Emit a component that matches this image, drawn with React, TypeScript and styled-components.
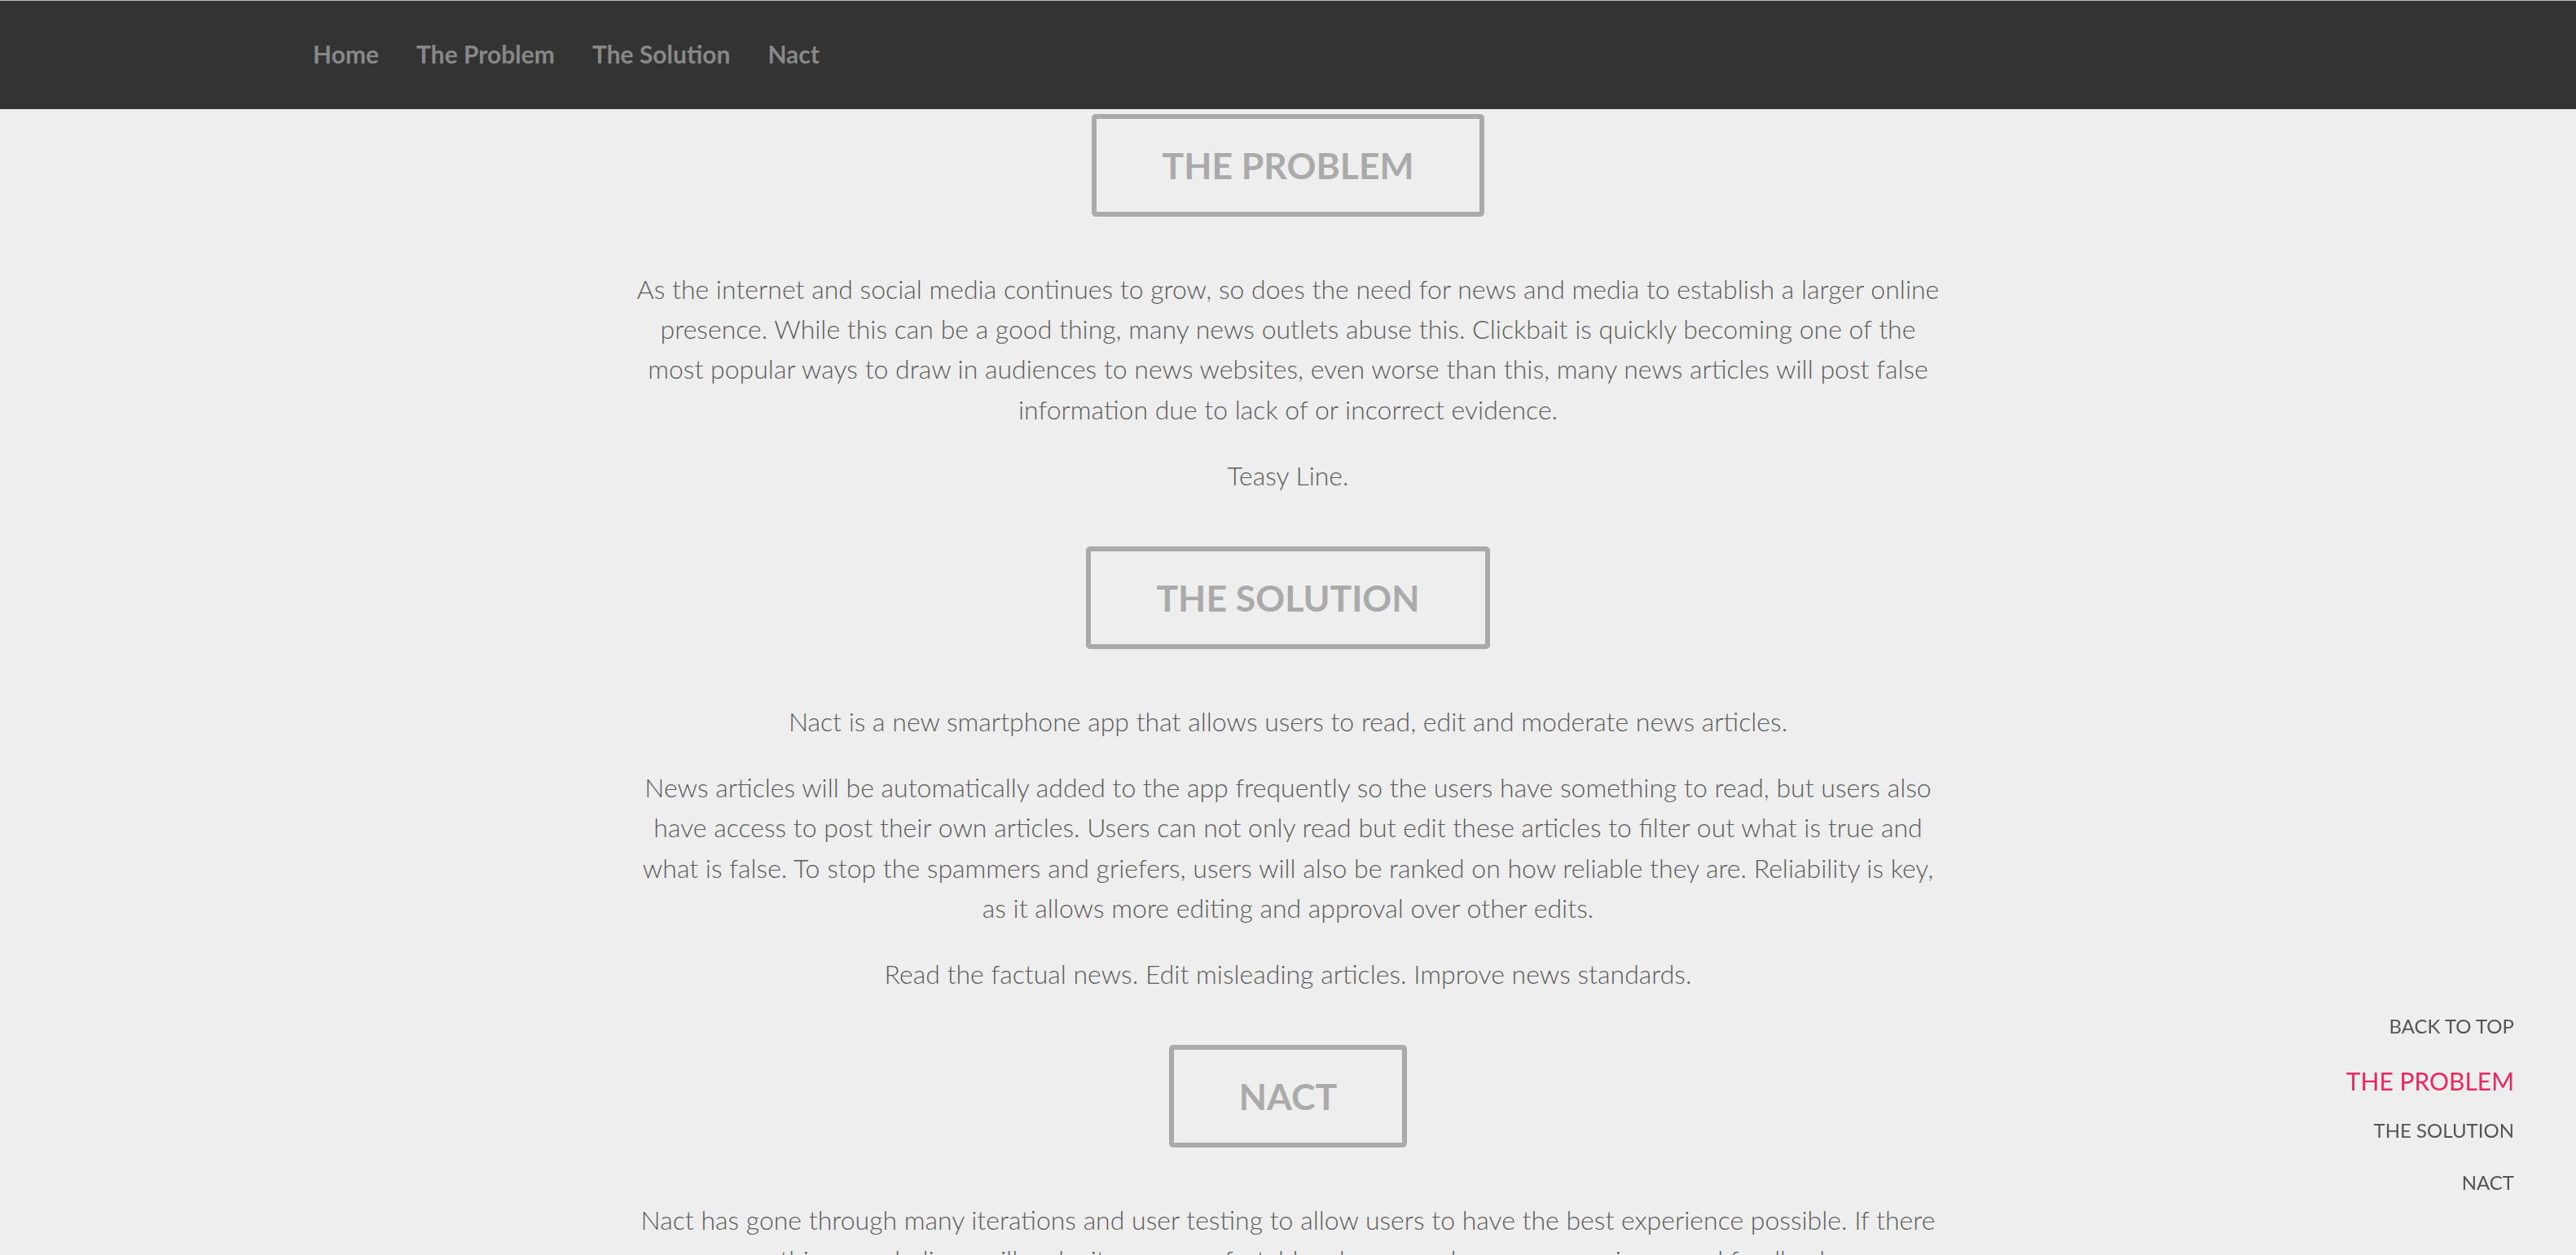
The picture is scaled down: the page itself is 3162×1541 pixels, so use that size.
import React from 'react';
import styled, { createGlobalStyle } from 'styled-components';

const GlobalStyle = createGlobalStyle`
  html, body {
    margin: 0;
    padding: 0;
    background: #eeeeee;
    font-family: Lato, "Open Sans", sans-serif;
  }
`;

const Header = styled.header`
  display: flex;
  align-items: center;
  box-sizing: border-box;
  height: 134px;
  padding-bottom: 3px;
  border-top: 1px solid #bdbdbd;
  background: #333333;
`;

const NavList = styled.nav`
  display: flex;
  align-items: center;
  padding-left: 361px;
`;

const NavLink = styled.a`
  padding: 0 23px;
  font-size: 30px;
  font-weight: 700;
  color: #888888;
  text-decoration: none;
  cursor: pointer;
`;

const Main = styled.main`
  max-width: 1608px;
  margin: 0 auto;
  padding-top: 6px;
  text-align: center;
`;

const Section = styled.section`
  & + & {
    padding-top: 31px;
  }
`;

const Title = styled.h2`
  display: inline-block;
  margin: 0 0 64px;
  padding: 32px 80px;
  border: 6px solid #aaaaaa;
  border-radius: 5px;
  font-size: 44.5px;
  line-height: 50px;
  font-weight: 700;
  color: #aaaaaa;
`;

const Text = styled.p`
  margin: 0 0 32px;
  font-size: 32px;
  line-height: 49.2px;
  font-weight: 300;
  color: #5c5c5c;
`;

const SideNav = styled.ul`
  position: fixed;
  right: 76px;
  bottom: 57px;
  display: flex;
  flex-direction: column;
  align-items: flex-end;
  margin: 0;
  padding: 0;
  list-style: none;
`;

const SideItem = styled.li<{ $active?: boolean }>`
  box-sizing: border-box;
  height: 64px;
  padding-top: ${(p) => (p.$active ? '6px' : '0')};
  line-height: ${(p) => (p.$active ? '58px' : '64px')};
  font-size: ${(p) => (p.$active ? '30px' : '24px')};
  font-weight: 400;
  color: ${(p) => (p.$active ? '#e8285f' : '#555555')};
  text-transform: uppercase;
  cursor: pointer;
`;

const navItems = ['Home', 'The Problem', 'The Solution', 'Nact'];

const sections = [
  {
    title: 'The Problem',
    paragraphs: [
      'As the internet and social media continues to grow, so does the need for news and media to establish a larger online presence. While this can be a good thing, many news outlets abuse this. Clickbait is quickly becoming one of the most popular ways to draw in audiences to news websites, even worse than this, many news articles will post false information due to lack of or incorrect evidence.',
      'Teasy Line.',
    ],
  },
  {
    title: 'The Solution',
    paragraphs: [
      'Nact is a new smartphone app that allows users to read, edit and moderate news articles.',
      'News articles will be automatically added to the app frequently so the users have something to read, but users also have access to post their own articles. Users can not only read but edit these articles to filter out what is true and what is false. To stop the spammers and griefers, users will also be ranked on how reliable they are. Reliability is key, as it allows more editing and approval over other edits.',
      'Read the factual news. Edit misleading articles. Improve news standards.',
    ],
  },
  {
    title: 'Nact',
    paragraphs: [
      'Nact has gone through many iterations and user testing to allow users to have the best experience possible. If there are things we believe will make it more comfortable, please send us your experience and feedback.',
    ],
  },
];

const sideItems = ['Back to top', 'The Problem', 'The Solution', 'Nact'];

const App: React.FC = () => (
  <>
    <GlobalStyle />
    <Header>
      <NavList>
        {navItems.map((item) => (
          <NavLink key={item}>{item}</NavLink>
        ))}
      </NavList>
    </Header>

    <Main>
      {sections.map((section) => (
        <Section key={section.title}>
          <Title>{section.title.toUpperCase()}</Title>
          {section.paragraphs.map((text) => (
            <Text key={text}>{text}</Text>
          ))}
        </Section>
      ))}
    </Main>

    <SideNav>
      {sideItems.map((item) => (
        <SideItem key={item} $active={item === 'The Problem'}>
          {item}
        </SideItem>
      ))}
    </SideNav>
  </>
);

export default App;
